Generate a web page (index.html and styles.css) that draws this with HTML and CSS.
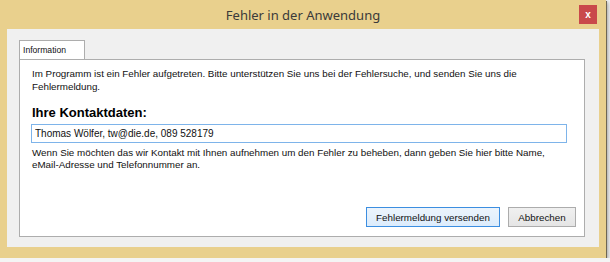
FILE: index.html
```html
<!DOCTYPE html>
<html lang="de">
<head>
<meta charset="UTF-8">
<title>Fehler in der Anwendung</title>
<link rel="stylesheet" href="styles.css">
</head>
<body>
<div class="window">
    <div class="titlebar">
        <span></span>
        <div class="title">Fehler in der Anwendung</div>
        <button type="button" class="close">x</button>
    </div>
    <div class="client">
        <div class="tabs">
            <div class="tab active">Information</div>
        </div>
        <div class="panel">
            <p class="intro">Im Programm ist ein Fehler aufgetreten. Bitte unterstützen Sie uns bei der Fehlersuche, und senden Sie uns die Fehlermeldung.</p>
            <h3 class="heading">Ihre Kontaktdaten:</h3>
            <input type="text" class="contact" value="Thomas Wölfer, tw@die.de, 089 528179">
            <p class="hint">Wenn Sie möchten das wir Kontakt mit Ihnen aufnehmen um den Fehler zu beheben, dann geben Sie hier bitte Name, eMail-Adresse und Telefonnummer an.</p>
            <div class="actions">
                <button type="button" class="btn default">Fehlermeldung versenden</button>
                <button type="button" class="btn">Abbrechen</button>
            </div>
        </div>
    </div>
</div>
</body>
</html>
```

FILE: styles.css
```css
/* Dialog in Windows 8 look */
body, html {
    margin: 0;
    padding: 0;
    background: #f4f4f4;
    font-family: "Liberation Sans", Arial, sans-serif;
}
.window {
    width: 606px;
    height: 258px;
    box-sizing: border-box;
    padding: 0 7px 11px 7px;
    background: #e9d08d;
    box-shadow: 1px 1px 0 #6e6754, 2px 2px 4px rgba(0,0,0,0.35);
    display: flex;
    flex-direction: column;
}
.titlebar {
    height: 29px;
    display: grid;
    grid-template-columns: 1fr auto 1fr;
    align-items: start;
}
.title {
    font-family: "Noto Sans", "Open Sans", sans-serif;
    font-size: 13px;
    color: #3a3a3a;
    padding-top: 6px;
}
.close {
    justify-self: end;
    margin: 5px 2px 0 0;
    width: 18px;
    height: 19px;
    padding: 0;
    border: none;
    background: #c9494a;
    color: #fff;
    font-family: "Liberation Sans", sans-serif;
    font-size: 10px;
    font-weight: bold;
    line-height: 17px;
}
.client {
    flex: 1;
    background: #f0f0f0;
    padding: 11px 14px 10px 12px;
    display: flex;
    flex-direction: column;
}
.tabs {
    display: flex;
    height: 19px;
}
.tab {
    font-size: 8.6px;
    color: #111;
    padding: 4px 3px 0 3px;
    width: 58px;
    border: 1px solid #adadad;
    border-bottom: none;
    background: #fff;
    position: relative;
    z-index: 1;
}
.panel {
    flex: 1;
    background: #fff;
    border: 1px solid #adadad;
    padding: 7px 8px 0 12px;
    display: flex;
    flex-direction: column;
    color: #111;
}
.intro, .hint {
    margin: 0;
    font-size: 9.8px;
    line-height: 13px;
    max-width: 530px;
}
.heading {
    margin: 12px 0 4px 0;
    font-size: 13px;
    font-weight: bold;
    color: #000;
}
.contact {
    width: 536px;
    height: 19px;
    box-sizing: border-box;
    margin: 0 0 0 -1px;
    padding: 0 3px;
    border: 1px solid #7eb4ea;
    font-family: "Liberation Sans", Arial, sans-serif;
    font-size: 10px;
    color: #111;
    outline: none;
}
.hint {
    margin-top: 4px;
    line-height: 12px;
}
.actions {
    display: flex;
    justify-content: flex-end;
    gap: 8px;
    margin-top: auto;
    margin-bottom: 9px;
}
.btn {
    height: 20px;
    padding: 0 6px;
    border: 1px solid #acacac;
    background: linear-gradient(#f0f0f0, #e5e5e5);
    font-family: "Liberation Sans", Arial, sans-serif;
    font-size: 9.8px;
    color: #111;
}
.btn.default {
    width: 134px;
    border-color: #3c8ee0;
    background: linear-gradient(#ecf4fc, #dcecfc);
}
.btn:not(.default) {
    width: 68px;
}
```
